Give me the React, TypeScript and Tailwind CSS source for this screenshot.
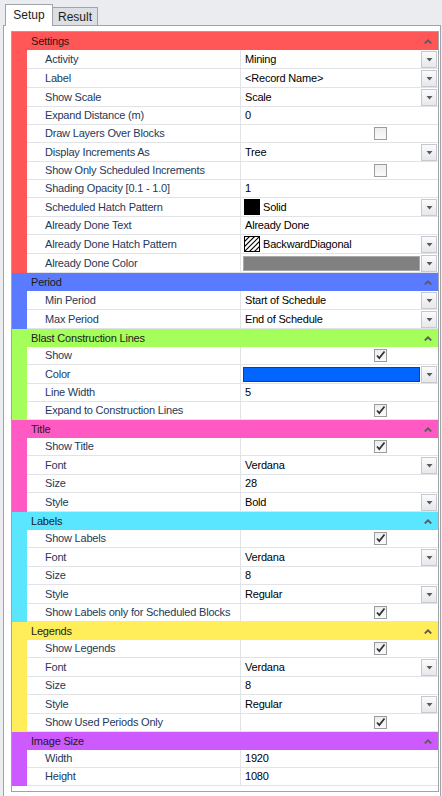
import React from 'react';

type Kind = 'text' | 'check' | 'uncheck' | 'solid' | 'hatch' | 'color';

interface Prop {
    label: string;
    value?: string;
    kind: Kind;
    dd?: boolean;
    swatch?: string;
}

interface Section {
    title: string;
    bg: string;
    rows: Prop[];
}

const sections: Section[] = [
    {
        title: 'Settings',
        bg: 'bg-[#ff5757]',
        rows: [
            { label: 'Activity', value: 'Mining', kind: 'text', dd: true },
            { label: 'Label', value: '<Record Name>', kind: 'text', dd: true },
            { label: 'Show Scale', value: 'Scale', kind: 'text', dd: true },
            { label: 'Expand Distance (m)', value: '0', kind: 'text' },
            { label: 'Draw Layers Over Blocks', kind: 'uncheck' },
            { label: 'Display Increments As', value: 'Tree', kind: 'text', dd: true },
            { label: 'Show Only Scheduled Increments', kind: 'uncheck' },
            { label: 'Shading Opacity [0.1 - 1.0]', value: '1', kind: 'text' },
            { label: 'Scheduled Hatch Pattern', value: 'Solid', kind: 'solid', dd: true },
            { label: 'Already Done Text', value: 'Already Done', kind: 'text' },
            { label: 'Already Done Hatch Pattern', value: 'BackwardDiagonal', kind: 'hatch', dd: true },
            { label: 'Already Done Color', kind: 'color', dd: true, swatch: 'bg-[#808080] border-[#a8a8a8]' },
        ],
    },
    {
        title: 'Period',
        bg: 'bg-[#5a7bff]',
        rows: [
            { label: 'Min Period', value: 'Start of Schedule', kind: 'text', dd: true },
            { label: 'Max Period', value: 'End of Schedule', kind: 'text', dd: true },
        ],
    },
    {
        title: 'Blast Construction Lines',
        bg: 'bg-[#a4ff5a]',
        rows: [
            { label: 'Show', kind: 'check' },
            { label: 'Color', kind: 'color', dd: true, swatch: 'bg-[#0066ff] border-[#3a3a3a]' },
            { label: 'Line Width', value: '5', kind: 'text' },
            { label: 'Expand to Construction Lines', kind: 'check' },
        ],
    },
    {
        title: 'Title',
        bg: 'bg-[#ff5ac4]',
        rows: [
            { label: 'Show Title', kind: 'check' },
            { label: 'Font', value: 'Verdana', kind: 'text', dd: true },
            { label: 'Size', value: '28', kind: 'text' },
            { label: 'Style', value: 'Bold', kind: 'text', dd: true },
        ],
    },
    {
        title: 'Labels',
        bg: 'bg-[#5ae6ff]',
        rows: [
            { label: 'Show Labels', kind: 'check' },
            { label: 'Font', value: 'Verdana', kind: 'text', dd: true },
            { label: 'Size', value: '8', kind: 'text' },
            { label: 'Style', value: 'Regular', kind: 'text', dd: true },
            { label: 'Show Labels only for Scheduled Blocks', kind: 'check' },
        ],
    },
    {
        title: 'Legends',
        bg: 'bg-[#ffee5a]',
        rows: [
            { label: 'Show Legends', kind: 'check' },
            { label: 'Font', value: 'Verdana', kind: 'text', dd: true },
            { label: 'Size', value: '8', kind: 'text' },
            { label: 'Style', value: 'Regular', kind: 'text', dd: true },
            { label: 'Show Used Periods Only', kind: 'check' },
        ],
    },
    {
        title: 'Image Size',
        bg: 'bg-[#cc5aff]',
        rows: [
            { label: 'Width', value: '1920', kind: 'text' },
            { label: 'Height', value: '1080', kind: 'text' },
        ],
    },
];

const DropButton = () => (
    <div className="mr-[1px] flex h-[17px] w-[16px] shrink-0 items-center justify-center border border-[#c6c9ce] bg-gradient-to-b from-[#fbfbfc] to-[#e6e8eb] pt-[2px]">
        <svg width="7" height="4" viewBox="0 0 7 4">
            <path d="M0.5 0h6l-3 3.5z" fill="#5a5a5a" />
        </svg>
    </div>
);

const CheckBox = ({ checked }: { checked: boolean }) => (
    <div className="ml-[133px] flex h-[13px] w-[13px] items-center justify-center border border-[#9a9ca0] bg-gradient-to-b from-[#eceded] to-[#fafafa]">
        {checked && (
            <svg width="11" height="11" viewBox="0 0 11 11">
                <path d="M2 5.5l2.3 2.6L9.5 1.5" fill="none" stroke="#2f3033" strokeWidth="1.7" />
            </svg>
        )}
    </div>
);

const Value = ({ p }: { p: Prop }) => {
    if (p.kind === 'check' || p.kind === 'uncheck') return <CheckBox checked={p.kind === 'check'} />;
    if (p.kind === 'color')
        return <div className={`ml-[2px] mr-[1px] h-[15px] flex-1 border ${p.swatch}`} />;
    if (p.kind === 'solid')
        return (
            <div className="flex flex-1 items-center gap-[3px] pl-[3px]">
                <div className="h-[16px] w-[16px] bg-black" />
                <span className="text-black">{p.value}</span>
            </div>
        );
    if (p.kind === 'hatch')
        return (
            <div className="flex flex-1 items-center gap-[3px] pl-[3px]">
                <svg width="16" height="16" viewBox="0 0 16 16">
                    <rect x="0.5" y="0.5" width="15" height="15" fill="#fff" stroke="#000" />
                    <path d="M0 6L6 0M0 11L11 0M0 16L16 0M5 16L16 5M10 16L16 10" stroke="#000" strokeWidth="1.1" />
                </svg>
                <span className="text-black">{p.value}</span>
            </div>
        );
    return <span className="flex-1 pl-[4px] text-black">{p.value}</span>;
};

const PropRow = ({ p, bg }: { p: Prop; bg: string }) => (
    <div className={`flex ${p.dd ? 'h-[19px]' : 'h-[18px]'}`}>
        <div className={`w-[15px] shrink-0 ${bg}`} />
        <div className="flex flex-1 border-b border-[#e2e3e6]">
            <div className="flex w-[214px] shrink-0 items-center border-r border-[#e2e3e6] pl-[18px] text-[#1e395b]">
                {p.label}
            </div>
            <div className="flex flex-1 items-center">
                <Value p={p} />
                {p.dd && <DropButton />}
            </div>
        </div>
    </div>
);

const SectionBlock = ({ s }: { s: Section }) => (
    <div>
        <div className={`flex h-[18px] items-center justify-between pl-[19px] pr-[6px] text-[#1b1b1b] ${s.bg}`}>
            <span>{s.title}</span>
            <svg width="8" height="5" viewBox="0 0 8 5">
                <path d="M0.8 4.5L4 1.3l3.2 3.2" fill="none" stroke="#5c5c5c" strokeWidth="1.8" />
            </svg>
        </div>
        {s.rows.map((p, i) => (
            <PropRow key={i} p={p} bg={s.bg} />
        ))}
    </div>
);

export default function App() {
    return (
        <div className="h-[796px] w-[442px] overflow-hidden bg-[#eaecef] font-['Liberation_Sans',Arial,sans-serif] text-[11px] tracking-[-0.2px]">
            {/* Tabs */}
            <div className="flex h-[26px] items-end pl-[5px] text-[12px] tracking-normal">
                <div className="relative z-10 flex h-[22px] w-[48px] items-center justify-center border border-b-0 border-[#a0a3a8] bg-white pb-[2px] text-[#1e1e1e]">
                    Setup
                </div>
                <div className="mb-[1px] flex h-[18px] w-[45px] items-center justify-center border border-b-0 border-l-0 border-[#a0a3a8] bg-[#dcdfe4] text-[#1e1e1e]">
                    Result
                </div>
            </div>

            {/* Panel */}
            <div className="-mt-[1px] ml-[3px] mr-[1px] h-[771px] border border-b-0 border-[#a0a3a8] bg-white pl-[7px] pr-[1px] pt-[5px]">
                <div className="h-[761px] border border-[#a0a3a8] bg-white">
                    {sections.map((s) => (
                        <SectionBlock key={s.title} s={s} />
                    ))}
                </div>
            </div>
        </div>
    );
}
